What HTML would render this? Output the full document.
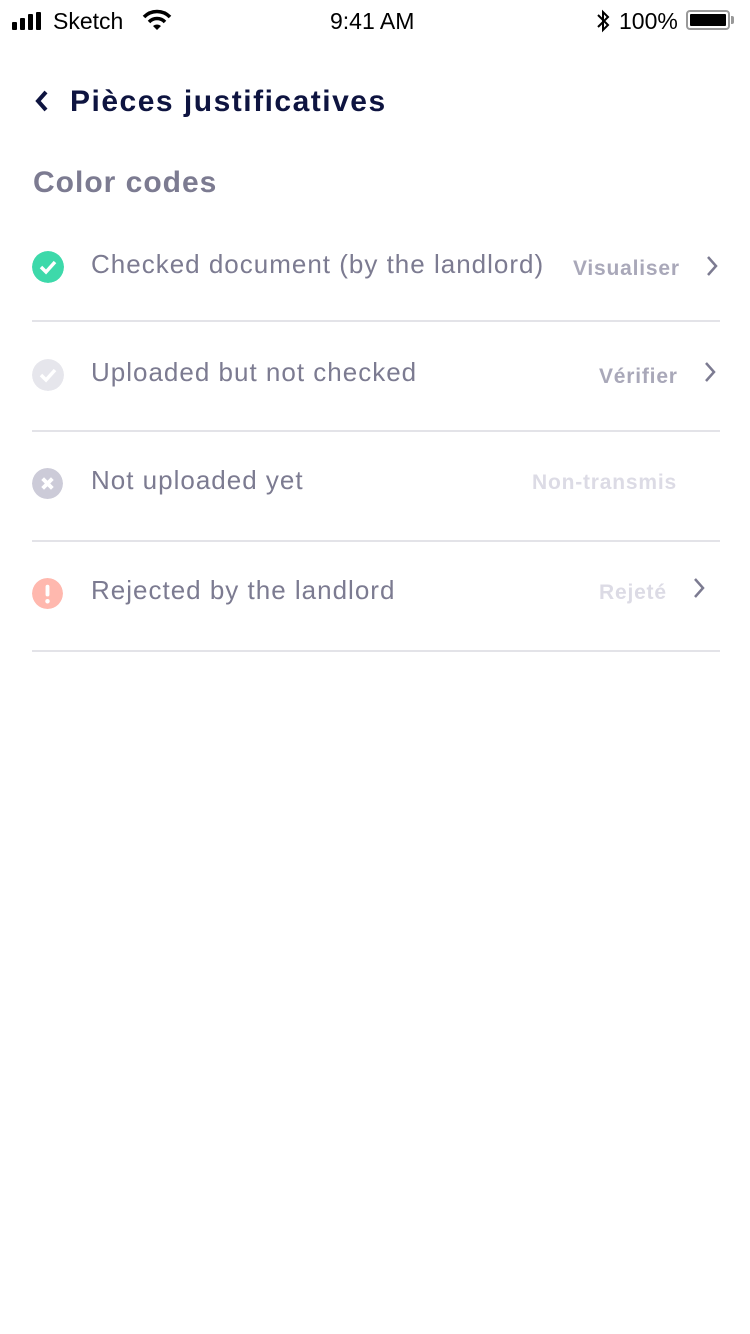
<!DOCTYPE html>
<html><head><meta charset="utf-8"><style>
body{margin:0;width:750px;height:1334px;background:#fff;font-family:"Liberation Sans",sans-serif;position:relative;overflow:hidden}
.a{position:absolute;white-space:nowrap}
.sb{font-size:23px;color:#000;top:8px}
.row{position:absolute;left:32px;width:688px;height:110px}
.line{position:absolute;left:32px;width:688px;height:2px;background:#e3e3e8}
.lbl{position:absolute;left:59px;font-size:26px;color:#7c7b91;top:0;letter-spacing:1px}
.act{position:absolute;font-size:21px;font-weight:bold;letter-spacing:0.8px}
.ic{position:absolute;left:0;width:32px;height:32px;border-radius:50%}
.chev{position:absolute}
</style></head><body>
<div class="a" style="left:12px;top:12px">
<svg width="36" height="18"><rect x="0" y="10" width="5" height="8" rx="1"/><rect x="8" y="6" width="5" height="12" rx="1"/><rect x="16" y="2" width="5" height="16" rx="1"/><rect x="24" y="0" width="5" height="18" rx="1"/></svg></div>
<div class="a sb" style="left:53px">Sketch</div>
<svg class="a" style="left:142px;top:9px" width="30" height="22" viewBox="0 0 30 22"><path d="M2 8 A18 18 0 0 1 28 8" stroke="#000" stroke-width="3.5" fill="none"/><path d="M7 13 A11 11 0 0 1 23 13" stroke="#000" stroke-width="3.5" fill="none"/><path d="M11 17 L15 21 L19 17 A6 6 0 0 0 11 17Z" fill="#000"/></svg>
<div class="a sb" style="left:330px">9:41 AM</div>
<svg class="a" style="left:595px;top:9px" width="16" height="24" viewBox="0 0 16 24"><path d="M3 6 L13 16 L8 21 L8 3 L13 8 L3 18" stroke="#000" stroke-width="2" fill="none"/></svg>
<div class="a sb" style="left:619px">100%</div>
<div class="a" style="left:686px;top:10px;width:44px;height:20px;border:2px solid #999;border-radius:4px;box-sizing:border-box;padding:2px"><div style="background:#000;width:100%;height:100%;border-radius:1px"></div></div>
<div class="a" style="left:731px;top:16px;width:3px;height:8px;background:#999;border-radius:0 2px 2px 0"></div>
<svg class="a" style="left:34px;top:89px" width="16" height="24" viewBox="0 0 16 24"><path d="M12 3 L4 12 L12 21" stroke="#0e1440" stroke-width="4" fill="none"/></svg>
<div class="a" style="left:70px;top:85px;font-size:30px;font-weight:bold;color:#0e1440;letter-spacing:1.5px">Pièces justificatives</div>
<div class="a" style="left:33px;top:166px;font-size:30px;font-weight:bold;color:#7c7b91;letter-spacing:1px">Color codes</div>
<div class="row" style="top:249px">
<svg class="ic" style="top:2px" viewBox="0 0 32 32"><circle cx="16" cy="16" r="16" fill="#3dd9aa"/><path d="M9 16 L14 21 L23 11" stroke="#fff" stroke-width="3.5" fill="none"/></svg>
<div class="lbl">Checked document (by the landlord)</div>
<div class="act" style="left:541px;top:8px;color:#a9a8b9">Visualiser</div>
<svg class="chev" style="left:673px;top:6px" width="14" height="22" viewBox="0 0 14 22"><path d="M3 2 L11 11 L3 20" stroke="#7c7b91" stroke-width="2.5" fill="none"/></svg>
</div>
<div class="line" style="top:320px"></div>
<div class="row" style="top:357px">
<svg class="ic" style="top:2px" viewBox="0 0 32 32"><circle cx="16" cy="16" r="16" fill="#e6e6ec"/><path d="M9 16 L14 21 L23 11" stroke="#fff" stroke-width="3.5" fill="none"/></svg>
<div class="lbl">Uploaded but not checked</div>
<div class="act" style="left:567px;top:8px;color:#a9a8b9">Vérifier</div>
<svg class="chev" style="left:671px;top:4px" width="14" height="22" viewBox="0 0 14 22"><path d="M3 2 L11 11 L3 20" stroke="#7c7b91" stroke-width="2.5" fill="none"/></svg>
</div>
<div class="line" style="top:430px"></div>
<div class="row" style="top:465px">
<svg class="ic" style="top:3px;width:31px;height:31px" viewBox="0 0 32 32"><circle cx="16" cy="16" r="16" fill="#cccbd8"/><path d="M11 11 L21 21 M21 11 L11 21" stroke="#fff" stroke-width="4" fill="none"/></svg>
<div class="lbl">Not uploaded yet</div>
<div class="act" style="left:500px;top:6px;color:#dcdbe5">Non-transmis</div>
</div>
<div class="line" style="top:540px"></div>
<div class="row" style="top:575px">
<svg class="ic" style="top:3px;width:31px;height:31px" viewBox="0 0 32 32"><circle cx="16" cy="16" r="16" fill="#ffb8ae"/><rect x="14" y="7" width="4" height="12" rx="2" fill="#fff"/><circle cx="16" cy="24" r="2.3" fill="#fff"/></svg>
<div class="lbl">Rejected by the landlord</div>
<div class="act" style="left:567px;top:6px;color:#dcdbe5">Rejeté</div>
<svg class="chev" style="left:660px;top:2px" width="14" height="22" viewBox="0 0 14 22"><path d="M3 2 L11 11 L3 20" stroke="#7c7b91" stroke-width="2.5" fill="none"/></svg>
</div>
<div class="line" style="top:650px"></div>
</body></html>
